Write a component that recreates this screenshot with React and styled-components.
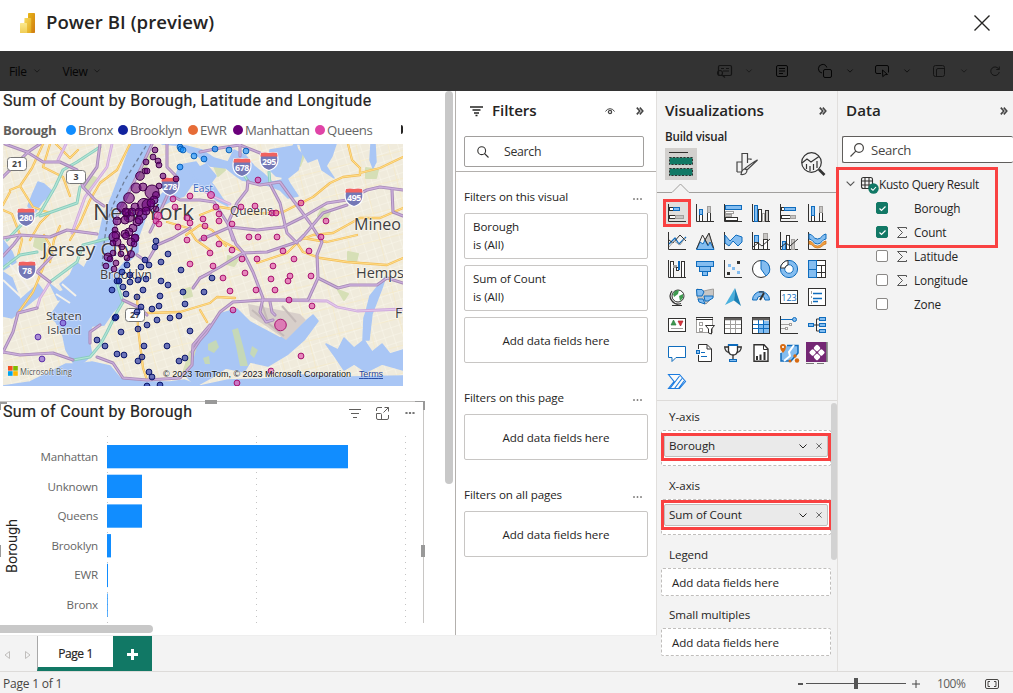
import React from "react";
import styled, { createGlobalStyle } from "styled-components";

const Global = createGlobalStyle`
  *, *::before, *::after { box-sizing: border-box; }
  body { margin: 0; background: #fff; font-family: "Open Sans", "Noto Sans", sans-serif; font-size: 12px; color: #252423; overflow: hidden; }
`;

const Page = styled.div`
  width: 1013px; height: 693px; display: flex; flex-direction: column; overflow: hidden; white-space: nowrap;
`;
const Icon = styled.svg`
  display: block; flex: none; overflow: visible; fill: none; stroke: ${(p) => p.$c || "#252423"}; stroke-width: ${(p) => p.$w || 1};
`;

/* ---------- header ---------- */
const Header = styled.header`
  height: 51px; flex: none; display: flex; align-items: center; padding: 0 23px 5px 20px; background: #fff;
`;
const AppTitle = styled.h1`
  margin: -2px 0 0 11px; flex: 1; font-size: 18.6px; font-weight: 600; letter-spacing: 0.04px; line-height: 24px;
`;
const Toolbar = styled.nav`
  height: 40px; flex: none; background: #333; display: flex; align-items: center; padding: 0 13px 0 9px; color: #050505;
`;
const MenuItem = styled.div`
  display: flex; align-items: center; gap: 7px; margin-right: 23px; font-size: 12px; letter-spacing: -0.35px;
`;
const Spacer = styled.div`flex: 1;`;
const Tool = styled.div`
  width: ${(p) => p.$w}px; display: flex; align-items: center; justify-content: space-between; margin-right: ${(p) => p.$mr}px;
  opacity: ${(p) => (p.$dim ? 0.65 : 1)};
`;

/* ---------- body columns ---------- */
const Body = styled.main`height: 580px; flex: none; display: flex;`;
const LeftSide = styled.div`width: 657px; flex: none; display: flex; flex-direction: column;`;
const Workspace = styled.div`height: 544px; flex: none; display: flex;`;
const Canvas = styled.section`
  position: relative; width: 456px; flex: none; overflow: hidden; border-right: 1px solid #b3b0ad; background: #fff;
`;
const ScrollBar = styled.div`
  position: absolute; background: #c8c8c8; border-radius: 4px;
  ${(p) => (p.$vertical ? "top: 0; right: 2px; width: 8px; height: 393px;" : "left: -6px; bottom: 2px; height: 8px; width: 159px;")}
`;
const VisualTitle = styled.h2`
  margin: ${(p) => p.$up || 0}px 0 0; font-family: Roboto, sans-serif; font-weight: 400; font-size: 16px; line-height: 20px; color: #252423;
  letter-spacing: ${(p) => p.$ls}px; -webkit-text-stroke: 0.2px #252423;
`;
const MapVisual = styled.div`padding: 0 0 0 3px; height: 310px; display: flex; flex-direction: column;`;
const Legend = styled.div`
  display: flex; align-items: center; height: 33px; padding-top: 4px; font-size: 13.2px; color: #666; letter-spacing: -0.33px;
`;
const LegendName = styled.span`font-weight: 700; color: #605e5c; width: 63px; letter-spacing: -0.4px;`;
const LegendItem = styled.span`
  display: flex; align-items: center; gap: 2px; width: ${(p) => p.$w}px;
  &::before { content: ""; width: 10px; height: 10px; border-radius: 50%; background: ${(p) => p.$c}; flex: none; }
`;
const LegendNext = styled.span`margin-left: 10px; width: 2px; height: 9px; background: #252423; border-radius: 0 2px 2px 0;`;
const MapSvg = styled.svg`display: block; width: 400px; height: 242px;`;

const ChartVisual = styled.div`
  position: relative; width: 424px; height: 222px; border: solid #c8c6c4; border-width: 1px 1px 0 0;
`;
const ChartHead = styled.div`
  display: flex; align-items: center; height: 22px; padding: 0 7px 0 3px; gap: 15px;
`;
const Handle = styled.i`
  position: absolute; width: ${(p) => p.$w}px; height: ${(p) => p.$h}px; left: ${(p) => p.$x}px; top: ${(p) => p.$y}px; background: #999;
`;
const ChartSvg = styled.svg`display: block; width: 423px; height: 199px;`;

const Tabs = styled.div`height: 36px; flex: none; display: flex; background: #f3f3f3; border-top: 1px solid #eee;`;
const TabNav = styled.div`width: 37px; display: flex; align-items: center; padding-left: 4px; gap: 15px; padding-top: 2px;`;
const Tab = styled.div`
  width: 76px; background: #fff; border-left: 1px solid #a8a8a8; border-bottom: 4px solid #117865;
  display: flex; align-items: center; justify-content: center; font-size: 12px; font-weight: 500; -webkit-text-stroke: 0.2px #252423; letter-spacing: -0.4px; padding-top: 4px;
`;
const AddTab = styled.div`width: 39px; background: #117865; display: flex; align-items: center; justify-content: center; padding-top: 2px;`;

/* ---------- filters ---------- */
const Filters = styled.aside`width: 201px; border-right: 1px solid #e1dfdd; background: #fff; display: flex; flex-direction: column;`;
const FiltersTop = styled.div`height: 81px; border-bottom: 1px solid #b3b0ad; padding: 0 12px 0 8px;`;
const PanelHead = styled.div`
  height: 40px; display: flex; align-items: center; padding: ${(p) => p.$pad || "0"};
`;
const PanelTitle = styled.h3`
  margin: -2px 0 0 ${(p) => p.$ml || 0}px; flex: 1; font-size: 15.2px; font-weight: 600; letter-spacing: ${(p) => p.$ls || 0}px;
`;
const SearchBox = styled.div`
  height: ${(p) => p.$h}px; margin-top: 5px; border: 1px solid ${(p) => p.$b}; border-right-width: ${(p) => (p.$open ? 0 : 1)}px;
  border-radius: 2px; display: flex; align-items: center; background: #fff; padding-left: ${(p) => p.$pl}px; gap: ${(p) => p.$gap}px;
  font-size: ${(p) => p.$fs}px; letter-spacing: -0.3px; color: ${(p) => p.$c};
`;
const EyeSlot = styled.span`margin-right: 21px;`;
const FilterGroup = styled.section`
  padding: 0 8px; display: flex; flex-direction: column; gap: 6px; margin-top: ${(p) => p.$mt}px;
`;
const GroupHead = styled.div`
  display: flex; justify-content: space-between; align-items: center; height: 20px; padding: 0 6px 2px 0; font-size: 11.6px; letter-spacing: -0.1px;
  svg { margin-top: 5px; }
`;
const Card = styled.div`
  height: 46px; border: 1px solid #c8c6c4; border-radius: 2px; font-size: 11.6px; line-height: 18px; letter-spacing: -0.08px;
  ${(p) => (p.$empty ? "display: flex; align-items: center; justify-content: center; padding-top: 1px;" : "padding: 4px 8px;")}
`;

/* ---------- visualizations ---------- */
const Viz = styled.aside`
  width: 181px; flex: none; background: #f3f3f3; border-right: 1px solid #e1dfdd; display: flex; flex-direction: column;
`;
const BuildLabel = styled.div`font-size: 11.6px; font-weight: 600; line-height: 16px; padding-left: 8px; margin: -2px 0 3px; letter-spacing: -0.16px;`;
const BuildTabs = styled.div`display: flex; height: 44px; padding-left: 8px; gap: 34px;`;
const BuildTab = styled.div`
  width: 32px; height: 32px; flex: none; background: ${(p) => (p.$on ? "#d2d0ce" : "none")}; display: flex; align-items: center; justify-content: center;
`;
const Gallery = styled.div`
  height: 208px; display: grid; grid-template-columns: repeat(6, 28px); grid-auto-rows: 28px; padding: 6px 0 0 6px; border-bottom: 1px solid #dddbd9;
`;
const Cell = styled.div`
  display: flex; align-items: center; justify-content: center;
  ${(p) => p.$on && "background: #e1dfdd; outline: 3px solid #f94141; outline-offset: -3px;"}
`;
const Wells = styled.div`position: relative; flex: 1; padding: 3px 0 0 4px;`;
const WellLabel = styled.div`height: 26px; display: flex; align-items: center; padding: 0 0 2px 8px; font-size: 11.6px; letter-spacing: -0.08px; margin-top: ${(p) => p.$mt || 0}px;`;
const Well = styled.div`
  position: relative; width: 170px; height: ${(p) => (p.$chip ? 36 : 28)}px; border: 1px dashed #c0bebc; background: #fff; border-radius: 2px;
  padding: ${(p) => (p.$chip ? "4px 2px" : "0 0 0 10px")}; font-size: 11.6px; line-height: 27px; letter-spacing: -0.08px;
`;
const Chip = styled.div`
  height: 22px; background: #eaeaea; border: 1px solid #c0bebc; border-radius: 2px; display: flex; align-items: center; padding: 0 5px 0 4px; gap: 9px; line-height: 20px;
`;
const Callout = styled.div`
  position: absolute; border: 3px solid #f94141; left: ${(p) => p.$x}px; top: ${(p) => p.$y}px; width: ${(p) => p.$w}px; height: ${(p) => p.$h}px;
`;
const WellScroll = styled.div`position: absolute; right: 0; top: 2px; width: 6px; height: 157px; background: #d2d2d2; border-radius: 3px;`;
const Grow = styled.span`flex: 1;`;

/* ---------- data ---------- */
const Data = styled.aside`position: relative; flex: 1; background: #f3f3f3; padding-left: 4px;`;
const Tree = styled.div`margin-top: 9px; font-size: 11.8px; letter-spacing: -0.16px;`;
const TableRow = styled.div`height: 24px; display: flex; align-items: center; padding-left: 4px; letter-spacing: -0.3px;`;
const TableIcon = styled.span`margin: 0 -1px 0 6px;`;
const FieldRow = styled.div`height: 24px; display: flex; align-items: center; padding-left: 34px;`;
const Check = styled.span`
  width: 12px; height: 12px; border-radius: 2px; border: 1px solid ${(p) => (p.$on ? "#117865" : "#8a8886")}; background: ${(p) => (p.$on ? "#117865" : "#fff")};
  display: flex; align-items: center; justify-content: center;
`;
const SigmaSlot = styled.span`width: 26px; padding-left: 9px;`;

/* ---------- status ---------- */
const Status = styled.footer`
  height: 22px; flex: none; background: #f3f3f3; border-top: 1px solid #dddbd9; display: flex; align-items: center; padding: 2px 14px 0 3px; color: #484644; font-size: 12px; letter-spacing: -0.2px;
`;
const ZoomTrack = styled.div`
  width: 100px; height: 11px; margin: 0 6px 0 3px; display: flex; align-items: center; justify-content: center;
  background: linear-gradient(#555, #555) center / 100% 1px no-repeat;
`;
const ZoomThumb = styled.div`width: 4px; height: 11px; background: #555;`;
const ZoomValue = styled.span`margin: 0 19px 0 17px; color: #605e5c; width: 29px; letter-spacing: -0.55px;`;

const Chevron = ({ c = "#252423", s = 6, w = 1 }) => (
  <Icon $c={c} $w={w} width={s} height={s / 2 + 1} viewBox="0 0 8 5"><path d="M.5.5 4 4 7.5.5" /></Icon>
);
const Collapse = () => (
  <Icon $c="#444" $w={1.6} width="8" height="8" viewBox="0 0 8 8"><path d="M.8.6 3.8 4 .8 7.4M3.8 .6 6.8 4 3.8 7.4" /></Icon>
);
const Dots = ({ c = "#605e5c", s = 1.6, w = 9 }) => (
  <Icon width={w} height="4" viewBox="0 0 9 4">
    {[1, 4.5, 8].map((x) => <rect key={x} x={x - s / 2} y={2 - s / 2} width={s} height={s} rx=".4" fill={c} stroke="none" />)}
  </Icon>
);

/* ---------- map data ---------- */
const WATER = [
  "131,144 152,144 141,168 129,192 117,215 113,240 98,240 103,218 112,196 121,172",
  "97,240 114,238 112,262 113,280 118,292 122,303 113,312 104,325 92,326 88,336 92,355 84,362 74,364 66,350 63,336 56,322 50,316 60,302 66,294 60,284 70,275 76,262 84,268 90,256",
  "148,208 144,222 138,238 138,252 128,262 122,276 119,290 112,284 118,270 130,256 132,240 140,222 150,206",
  "3,272 12,278 20,300 38,284 44,292 24,308 12,318 3,316", "3,240 12,252 16,262 3,270",
  "38,182 44,184 53,192 42,202 34,214 28,206 33,193",
  "50,284 60,292 70,288 72,298 58,300",
  "162,144 180,144 188,152 198,156 210,166 226,168 236,176 242,180 262,184 270,186 280,190 288,198 298,196 290,184 284,172 290,160 300,158 296,144 336,144 332,156 326,166 334,178 322,170 318,158 308,162 302,152 300,144 294,144 284,168 282,180 272,182 264,174 254,166 246,156 234,150 228,162 214,158 202,150 186,146",
  "270,150 294,146 302,154 298,170 288,178 276,176 268,168",
  "180,165 196,162 206,176 214,186 222,198 228,206 216,200 206,190 192,184 184,196 172,200 158,208 150,206 164,192 174,180",
  "371,144 375,144 376,162 373,168 370,160", "190,172 206,164 216,176 210,184 196,180",
  "200,338 208,330 219,314 237,309 250,322 280,338 295,330 313,315 318,321 304,340 288,354 268,366 250,362 244,372 226,368 214,376 196,386 186,376 194,360",
  "3,386 30,382 50,372 66,364 78,364 92,362 110,366 120,378 142,382 170,382 184,380 200,386",
  "200,386 228,380 262,379 300,375 350,377 403,376 403,386",
  "326,344 338,350 344,338 354,348 364,340 372,352 382,344 390,354 403,350 403,370 382,364 366,372 354,364 344,370 336,358",
  "366,312 370,296 386,276 382,288 372,314 369,340 363,340 364,318",
];
const LANDS = [
  "208,344 216,340 219,347 214,353 208,350", "232,330 238,328 243,346 248,366 240,366 236,346", "252,346 258,350 254,358 250,354", "203,358 209,356 210,364 205,364",
];
const PARKS = [
  "146,150 152,154 140,180 134,178", "297,152 304,156 300,166 296,160", "228,256 238,260 234,266 227,264", "214,166 222,162 225,170 218,176",
  "36,236 46,240 42,250 34,246", "90,176 96,178 90,192 85,188", "322,208 330,212 326,220 318,216",
  "190,352 202,346 196,372 182,376", "366,168 378,170 376,178 366,178", "338,290 348,294 344,300", "184,290 190,288 192,296 184,298", "348,252 358,254 356,262 348,260",
];
const ORANGE = [
  "43,144 32,168 20,186 10,190", "20,186 33,207 50,213 40,223 30,240", "50,144 43,167 63,177 70,196", "130,144 117,170 100,183 90,200 80,223 70,240",
  "348,144 352,160 360,168 360,175 343,177 330,183 313,197 283,212 250,214", "360,173 380,168 403,157", "300,240 313,235 333,233 360,218 380,218 403,208",
  "200,215 220,207 232,209", "3,210 12,214 22,240 18,256", "137,295 138,328 143,368 147,380", "147,313 180,312 210,303 217,297 235,298", "18,313 33,292 43,268 50,245 44,235",
  "257,263 287,253 297,243 303,252 320,258 347,262 387,265 403,258", "303,238 327,242 357,235", "200,310 207,322", "167,222 188,228 196,240 210,250", "220,240 243,252",
  "186,235 200,225 212,230 226,246", "56,144 70,158 78,150", "3,205 10,192", "60,226 54,240 50,262",
];
const PURPLE = [
  "5,144 27,152 43,162 60,162 77,170 83,187 95,200 104,206", "3,177 28,152 40,144", "100,144 97,167 83,187", "152,144 141,168 129,192 118,214 113,238",
  "3,238 20,235 50,237 67,230 97,234", "167,144 167,167 177,177 167,193 180,200 200,200 214,202 228,224 233,240", "200,152 220,148 240,145 260,153", "240,144 240,156",
  "248,181 247,190 237,203 228,223 236,244 243,252 253,272 263,298 260,312 266,322 273,320", "248,182 260,185 280,182 293,200 310,223 322,242 317,255 318,278 308,300 263,300 233,302 220,312 207,332 200,340 192,352",
  "270,184 280,203 287,233 297,243", "200,240 230,227 257,230 283,227 303,217 327,203 347,200 367,190 380,187 403,190", "392,190 393,212 403,216", "300,240 323,213 347,205",
  "200,278 220,267 243,253 267,252 297,242 303,236", "318,278 338,288 350,285 377,285 387,278 403,283", "270,302 272,312 275,315",
  "3,352 13,332 18,313 37,308", "50,282 37,272 53,255", "3,352 20,355 53,353 73,360", "90,343 90,332 100,325", "97,357 113,363 123,378 147,380 180,378 192,365 193,345 210,325",
  "123,300 140,308 147,315", "193,288 200,278 210,273", "137,255 147,262 157,245 173,238 190,228", "168,194 158,216 150,232", "3,256 14,244 20,236",
];
const LILAC = ["112,144 107,167 85,197 72,233", "50,282 40,298 37,308", "263,300 327,301 337,307 357,311 403,309", "66,144 58,160", "200,188 212,196 230,204"];
const TEAL = [
  "100,147 77,162 63,170 55,187 40,213 23,223 7,240", "80,187 77,203 40,216", "242,172 248,181", "269,172 270,184", "73,360 90,357 100,345 107,332 117,312 123,302 117,284",
  "3,268 20,255 37,252", "50,282 77,262 83,245 110,238",
];

const MANHATTAN = [
  [155, 150], [153, 157], [158, 161], [146, 162], [159, 165], [145, 171], [147, 171], [140, 176, 4.3], [163, 176], [176, 179], [159, 186], [152, 192, 7], [136, 188, 5], [143, 187, 4],
  [129, 198, 5.3], [156, 195, 3.5], [154, 200, 4], [122, 207, 5], [144, 205, 6.6], [148, 205, 6], [135, 207, 4], [156, 209], [127, 213, 4], [129, 217, 5], [142, 215, 5], [125, 220, 4],
  [117, 221, 4], [137, 222, 4], [133, 228, 4], [129, 232, 4], [115, 230], [116, 235, 4], [125, 234, 4], [135, 238, 3.5], [139, 220, 4], [146, 211, 4], [114, 237, 5], [126, 236, 3.5], [135, 238, 4],
  [117, 242, 4], [113, 243], [122, 247], [131, 242, 4], [134, 244], [113, 253], [121, 254], [131, 254, 3.5], [127, 258], [108, 257, 4], [110, 259], [116, 263], [106, 266], [114, 269], [126, 212, 4], [132, 212, 4], [151, 203, 4], [139, 212, 4],
];
const BROOKLYN = [
  [156, 241], [155, 247], [168, 254], [161, 262], [145, 260], [149, 265], [141, 267], [127, 265], [181, 270], [122, 272], [130, 275], [130, 282], [138, 280], [146, 279], [161, 281], [117, 281], [119, 281],
  [168, 285], [123, 287], [112, 290], [126, 294], [143, 290], [183, 292], [137, 297], [160, 296], [204, 292], [185, 304], [141, 307], [152, 309], [159, 306], [137, 312], [115, 318], [116, 317], [170, 318],
  [179, 316], [157, 320], [147, 325], [121, 332], [138, 329], [190, 331], [97, 340], [105, 346], [144, 346], [167, 346], [117, 354], [124, 355], [142, 357], [138, 361], [179, 361], [185, 358], [149, 372],
  [152, 377], [147, 386], [160, 385], [212, 278],
];
const QUEENS = [
  [173, 199], [175, 207], [190, 196], [158, 216, 4], [156, 221], [159, 224], [178, 227], [187, 218], [190, 223], [203, 219], [205, 226], [211, 195, 3.5], [216, 207], [219, 214], [219, 221], [232, 224],
  [241, 207], [255, 206], [272, 213], [276, 213], [258, 180], [301, 203], [326, 221], [321, 237], [249, 237], [258, 237], [277, 237], [204, 238], [219, 244], [210, 253], [232, 250], [213, 266], [223, 278],
  [242, 259], [257, 259], [245, 273], [283, 251], [294, 259], [309, 251], [273, 266], [271, 279], [290, 276], [288, 281], [311, 276], [230, 291], [256, 290], [275, 290], [289, 300], [312, 306], [233, 310],
  [280.5, 325, 5.8], [301, 356], [271, 371], [237, 383], [187, 240], [190, 264],
];
const BRONX = [[180, 147], [181, 149], [183, 150], [194, 156], [204, 159], [180, 167], [215, 149], [229, 150], [246, 151]];
const STATEN = [[63, 323], [38, 337], [42, 359]];

const Roads = ({ list, edge, core, w }) => (
  <g fill="none" strokeLinejoin="round" strokeLinecap="round">
    {list.map((p) => <polyline key={p} points={p} stroke={edge} strokeWidth={w} />)}
    {list.map((p) => <polyline key={p} points={p} stroke={core} strokeWidth={w * 0.42} />)}
  </g>
);
const Points = ({ list, fill, stroke, o = 0.6 }) => (
  <g fill={fill} fillOpacity={o} stroke={stroke} strokeWidth="1">
    {list.map(([x, y, r = 2.9], i) => <circle key={i} cx={x} cy={y} r={r} />)}
  </g>
);
const Shield = ({ x, y, n, w = 16 }) => (
  <g transform={`translate(${x} ${y})`}>
    <path d={`M${-w / 2} -8 Q${-w / 4} -9 0 -8 Q${w / 4} -9 ${w / 2} -8 Q${w / 2 + 4} 6 0 9.5 Q${-w / 2 - 4} 6 ${-w / 2} -8Z`} fill="#7478b6" stroke="#fff" strokeWidth="1.2" />
    <path d={`M${-w / 2} -8 Q${-w / 4} -9 0 -8 Q${w / 4} -9 ${w / 2} -8 L${w / 2 + 0.7} -4.5H${-w / 2 - 0.7}Z`} fill="#f0625f" />
    <text y="4" textAnchor="middle" fontSize="8.8" fontWeight="700" fill="#fff" letterSpacing="-.3">{n}</text>
  </g>
);
const RouteSign = ({ x, y, n }) => (
  <g transform={`translate(${x} ${y})`}>
    <rect x="-9.5" y="-6.5" width="19" height="13" rx="3" fill="#fff" stroke="#777" strokeWidth="1" />
    <text y="3.3" textAnchor="middle" fontSize="8.8" fontWeight="700" fill="#444">{n}</text>
  </g>
);
const Label = ({ x, y, s, w, c = "#3f3f3f", children }) => (
  <text x={x} y={y} fontSize={s} textLength={w} lengthAdjust="spacingAndGlyphs" fill={c} stroke="#fff" strokeOpacity=".55" strokeWidth="1.6" paintOrder="stroke">{children}</text>
);

const BoroughMap = () => (
  <MapSvg viewBox="3 144 400 242">
    <defs>
      <pattern id="streets" width="9" height="8" patternUnits="userSpaceOnUse" patternTransform="rotate(-18)">
        <path d="M0 0H9M0 0V8" stroke="#faf8ee" strokeWidth=".9" fill="none" />
      </pattern>
      <pattern id="avenues" width="31" height="27" patternUnits="userSpaceOnUse" patternTransform="rotate(-14)">
        <path d="M0 0H31M0 0V27" stroke="#f7e9bf" strokeWidth="1" fill="none" />
      </pattern>
    </defs>
    <rect x="3" y="144" width="400" height="242" fill="#f0ebdc" />
    <rect x="3" y="144" width="400" height="242" fill="url(#streets)" />
    <rect x="3" y="144" width="400" height="242" fill="url(#avenues)" />
    {PARKS.map((p) => <polygon key={p} points={p} fill="#d6dfb6" strokeWidth="2" stroke="#d6dfb6" strokeLinejoin="round" />)}
    {WATER.map((p) => <polygon key={p} points={p} fill="#a9c6f5" stroke="#a9c6f5" strokeWidth="1.5" strokeLinejoin="round" />)}
    {LANDS.map((p) => <polygon key={p} points={p} fill="#c5d8b8" />)}
    <polygon points="248,304 300,314 306,320 286,340 266,326 250,316" fill="#d8cfca" />
    <path d="M252 310 284 336M282 306 296 322M262 304 268 322" stroke="#c4bab8" strokeWidth="2" />
    <path d="M3 280 20 296M8 262 30 290M62 284 76 296M56 294 70 303M184 334 196 342" stroke="#f4f1ea" strokeWidth="2" />
    <Roads list={ORANGE} edge="#f3bd5a" core="#ffe08a" w={2.3} />
    <Roads list={TEAL} edge="#8acdbe" core="#b4e5d6" w={3} />
    <Roads list={LILAC} edge="#cfa9dc" core="#e3c9ec" w={2.8} />
    <Roads list={PURPLE} edge="#a78ab8" core="#cbaedb" w={3.1} />
    <polyline points="146,146 125,180 113,205 107,222 104,244 102,270" fill="none" stroke="#6f7f99" strokeWidth="1.3" strokeDasharray="4 3" />
    <Shield x={26} y={217} n="280" /><Shield x={27} y={270} n="78" /><Shield x={170} y={186} n="278" /><Shield x={242} y={167} n="678" />
    <Shield x={269} y={161} n="295" /><Shield x={354} y={197} n="495" />
    <RouteSign x={17} y={164} n="21" /><RouteSign x={76} y={177} n="3" /><RouteSign x={135} y={315} n="27" />
    <Label x={93} y={220} s={22} w={101}>New York</Label>
    <Label x={42} y={256} s={18} w={92}>Jersey City</Label>
    <Label x={100} y={279} s={12} w={52}>Brooklyn</Label>
    <Label x={230} y={215} s={12} w={43}>Queens</Label>
    <Label x={193} y={192} s={10.5} w={20} c="#3d6cc0">East</Label>
    <Label x={354} y={230} s={16} w={47}>Mineo</Label>
    <Label x={356} y={278} s={15} w={48}>Hemps</Label>
    <Label x={395} y={318} s={14}>F</Label>
    <Label x={46} y={319.500} s={11.200} w={36}>Staten</Label>
    <Label x={47} y={334} s={11.200} w={34}>Island</Label>
    <Points list={STATEN} fill="#7b4fd0" stroke="#5b2fa8" />
    <Points list={BROOKLYN} fill="#12239e" stroke="#0a1668" />
    <Points list={BRONX} fill="#118dff" stroke="#0b62b8" />
    <Points list={QUEENS} fill="#e044a7" stroke="#a8126f" />
    <Points list={MANHATTAN} fill="#6b007b" stroke="#3f0049" />
    <rect x="8" y="366" width="4.6" height="4.6" fill="#f25022" /><rect x="13.2" y="366" width="4.6" height="4.6" fill="#7fba00" />
    <rect x="8" y="371.2" width="4.6" height="4.6" fill="#00a4ef" /><rect x="13.2" y="371.2" width="4.6" height="4.6" fill="#ffb900" />
    <text x="20" y="374.5" fontSize="8.5" textLength="52" lengthAdjust="spacingAndGlyphs" fill="#555" stroke="#fff" strokeOpacity=".6" paintOrder="stroke">Microsoft Bing</text>
    <text x="163" y="377" fontSize="9" fontFamily="Liberation Sans, sans-serif" textLength="188" fill="#111" stroke="#fff" strokeOpacity=".5" paintOrder="stroke">© 2023 TomTom, © 2023 Microsoft Corporation</text>
    <text x="359" y="377" fontSize="9" fontFamily="Liberation Sans, sans-serif" textLength="24" fill="#1f45a0" textDecoration="underline">Terms</text>
  </MapSvg>
);

const BARS = [["Manhattan", 241], ["Unknown", 35], ["Queens", 35], ["Brooklyn", 4], ["EWR", 1], ["Bronx", 0.7]];
const BarChart = () => (
  <ChartSvg viewBox="0 424 423 199">
    <g stroke="#c4c4c4" strokeWidth="1" strokeDasharray="1 5"><path d="M107.5 436V623M256.5 436V623M405.5 436V623" /></g>
    {BARS.map(([n, v], i) => (
      <g key={n}>
        <rect x="107" y={445 + i * 29.7} width={v} height="23.3" fill="#118dff" />
        <text x="98" y={461 + i * 29.6} textAnchor="end" fontSize="11.6" letterSpacing="-.2" fill="#666">{n}</text>
      </g>
    ))}
    <text transform="translate(17 573) rotate(-90)" fontFamily="Roboto, sans-serif" fontSize="14.5" textLength="54" fill="#252423">Borough</text>
  </ChartSvg>
);

/* ---------- gallery icons, 18 x 18 ---------- */
const D = "#323130", B = "#0f6cbd", L = "#84bdf0", G = "#a19f9d";
const AX = <path d="M.5 0V17.5H18" stroke={D} />;
const R = (x, y, w, h, s = D, f = "#fff") => <rect x={x + 0.5} y={y + 0.5} width={w - 1} height={h - 1} stroke={s} fill={f} />;
const ICONS = [
  <>{AX}{R(1, 3, 5, 4)}{R(5, 3, 7, 4, B, L)}{R(1, 11, 7, 4)}{R(7, 11, 9, 4, G, "#c8c6c4")}</>,
  <>{AX}{R(3, 10, 4, 8)}{R(3, 5, 4, 6, B, L)}{R(11, 8, 4, 10)}{R(11, 2, 4, 7, G, "#c8c6c4")}</>,
  <>{AX}{R(1, 1, 17, 5, B, L)}{R(1, 7, 9, 3, G)}{R(1, 10, 7, 3, G, "#c8c6c4")}{R(1, 13, 13, 4, D)}</>,
  <>{AX}{R(2, 1, 4, 17, B, L)}{R(6, 5, 4, 13, D)}{R(10, 9, 3, 9, G)}{R(13, 6, 4, 12, D, "#c8c6c4")}</>,
  <>{AX}{R(1, 3, 4, 4)}{R(4, 3, 12, 4, B, L)}{R(1, 11, 10, 4)}{R(10, 11, 6, 4, G, "#c8c6c4")}</>,
  <>{AX}{R(3, 11, 4, 7)}{R(3, 2, 4, 10, B, L)}{R(11, 8, 4, 10)}{R(11, 2, 4, 7, G, "#c8c6c4")}</>,
  <>{AX}<path d="M1 12 7 6 11 12 18 5" stroke={B} strokeWidth="1.3" /><path d="M1 8 5 11 12 3 18 9" stroke={D} /><path d="M1 15 6 9 12 13 17 6" stroke={G} /></>,
  <><path d="M8 9 13 2 18 17" fill="#c8c6c4" stroke={G} /><path d="M.5 17.500 4 10 7 12 9 8 12 14 14 10 18 17.500Z" fill={L} stroke={B} /><path d="M.5 17 6.500 3 12 13M9 8 13 1 17.500 16" stroke={D} /></>,
  <>{AX}<path d="M1 3 6 9 12 3 18 5V10L14 14 9 9 5 14 1 11Z" fill={L} stroke={B} /></>,
  <>{AX}{R(2, 3, 5, 8, B, L)}{R(11, 1, 5, 7, G, "#c8c6c4")}{R(2, 10, 5, 8)}{R(11, 7, 5, 11)}<path d="M1 15 6 11 10 14 18 7" stroke={D} /></>,
  <>{AX}{R(2, 9, 4, 9, B, L)}{R(6, 3, 4, 15)}{R(11, 7, 4, 11, G, "#c8c6c4")}<path d="M1 15 6 11 10 14 18 7" stroke={D} /></>,
  <>{AX}<path d="M1 2C5 2 5 7 9.500 7S14 2 18 2V7C14 7 14 12 9.500 12S5 7 1 7Z" fill={L} stroke={B} /><path d="M1 9C5 9 5 14 9.500 14S14 9 18 9V12C15 12 14 16 9.500 16S5 12 1 12Z" fill="#f0a040" stroke="#c66a12" strokeWidth=".7" /></>,
  <>{AX}{R(2, 1, 4, 17)}{R(5, 5, 4, 3, G, G)}{R(8, 7, 3, 4, D)}{R(10, 1, 2, 9, B, L)}{R(13, 1, 4, 17)}</>,
  <>{R(0, 1, 18, 6, B, L)}{R(3, 6, 12, 6, B, L)}{R(6, 11, 6, 5, B, L)}</>,
  <>{AX}<g stroke="none"><rect x="13" y="1" width="3" height="3" fill={D} /><rect x="4" y="4" width="3" height="3" fill={L} /><rect x="8" y="7" width="3" height="3" fill={L} /><rect x="13" y="11" width="3" height="3" fill={L} /><rect x="3" y="12" width="3" height="3" fill={D} /></g></>,
  <><circle cx="9" cy="9" r="8.5" fill="#fff" stroke={D} /><path d="M9 9V.5A8.5 8.5 0 0 1 14 16Z" fill={L} stroke={B} /></>,
  <><circle cx="9" cy="9" r="6.5" stroke={L} strokeWidth="4" /><circle cx="9" cy="9" r="8.6" stroke={B} /><circle cx="9" cy="9" r="4.3" fill="#fff" stroke={B} /><path d="M.5 8A8.5 8.5 0 0 1 8 .5V5Q5.500 5.500 5 8Z" fill="#fff" stroke={D} /></>,
  <>{R(0, 0, 18, 18)}{R(0, 0, 9, 10, B, L)}{R(0, 9, 9, 9, B, L)}<path d="M9 5.500H18M13.500 5.500V18M9 12.500H18" stroke={D} /></>,
  <><circle cx="10" cy="8" r="6" fill="#fff" stroke={D} /><path d="M7 3 11 2 10 6 6 9 5 6ZM11 8 15 6 15 10 12 13Z" fill="#3f9a50" stroke="none" /><path d="M4 3A8 8 0 0 0 13 15.500M9 16V18M4 17.500H14" stroke={D} strokeWidth="1.200" /></>,
  <><path d="M1 1 5 2 8 3 12 2 17.500 1V8L14 12 10 16 7 14 3 13 1 8Z" fill="#c8c6c4" stroke={G} /><path d="M.5 1.500H6L8 4 6 8H1ZM8 8H17V10L12 13H9ZM2 11H7L9 16 3 14Z" fill={L} stroke={B} /></>,
  <><path d="M11 0 1 17 10 12.500Z" fill="#49b0de" stroke="none" /><path d="M11 0 17 18 10 12.500Z" fill="#1a7fb4" stroke="none" /></>,
  <><path d="M.5 12A8.500 8.500 0 0 1 17.500 12H13A4 4 0 0 0 5 12Z" fill={L} stroke={B} /><path d="M7 4 12 4" stroke={D} /><path d="M8 12 12 5" stroke={D} strokeWidth="2" /></>,
  <>{R(0, 2, 18, 14)}<text x="9" y="12.500" fontSize="9" textAnchor="middle" fill={B} stroke="none">123</text></>,
  <>{R(0, 0, 18, 18)}<path d="M3.500 3V6M3.500 8V10M3.500 13V16" stroke={G} /><path d="M5 5.500H14M5 10.500H14M5 13.500H10" stroke={B} strokeWidth="1.600" /></>,
  <>{R(0, 2, 18, 14)}<path d="M3 9 5.500 4 8 9Z" fill="#3f9a50" stroke="#2c7a3c" strokeWidth=".7" /><path d="M10 5H15L12.500 10Z" fill="#d9363e" stroke="#b0202a" strokeWidth=".7" /><path d="M3 12.500H15" stroke={G} /></>,
  <>{R(0, 1, 17, 16, G)}<path d="M0 1.500H17M0 3.500H17" stroke={D} />{R(3, 6, 4, 4, G)}{R(3, 12, 4, 4, G)}<path d="M9.500 9.500H18.500L15.500 13V18L12.500 17V13Z" fill="#fff" stroke={D} /></>,
  <>{R(0, 1, 18, 17, D)}<path d="M.5 3H17.500" stroke="#605e5c" strokeWidth="2.500" /><path d="M1 8.500H17M1 12.500H17M6.500 4V17M11.500 4V17" stroke={G} /></>,
  <>{R(0, 1, 18, 17, D)}<path d="M12 5H17V9H12ZM7 9H17V17H7Z" fill={L} stroke="none" /><path d="M.5 3H17.500" stroke="#605e5c" strokeWidth="2.500" /><path d="M1 8.500H17M1 12.500H17M6.500 4V17M11.500 4V17" stroke={B} /></>,
  <>{AX}<path d="M1 3.500H13" stroke={B} /><circle cx="14.500" cy="3.500" r="2" fill={L} stroke={B} /><path d="M1 8.500H9M1 12.500H5" stroke={G} />{R(9, 7, 3, 3, G)}{R(5, 11, 3, 3, G)}</>,
  <>{R(0, 7, 6, 4, B, L)}{R(11, 1, 7, 4, B, L)}{R(11, 7, 7, 4, B, L)}{R(11, 13, 7, 4, B, L)}<path d="M6 9H11M8.500 9V3H11M8.500 9V15H11" stroke={D} /></>,
  <path d="M.5 2.500H17.500V13.500H8L4 17.500V13.500H.5Z" stroke={B} fill="#fff" />,
  <><path d="M2.500 5V.5H11L15.500 5V17.500H2.500V11" fill="#fff" stroke={D} /><path d="M11 .5V5H15.500" stroke={D} />{R(0, 6, 4, 4, B, L)}<path d="M5 8.500H9M5 12.500H11" stroke={B} /></>,
  <><path d="M4.500 1H13.500V7Q13 11 9 11Q5 11 4.500 7Z" fill="#fff" stroke={D} strokeWidth="1.300" /><path d="M4 3H.7Q1 8 5.500 8.500M14 3H17.300Q17 8 12.500 8.500M9 11V15" stroke={D} strokeWidth="1.300" />{R(4, 0, 10, 2, B, L)}{R(5, 15, 8, 3, B, L)}</>,
  <><path d="M2 .7H12L16 5V17.300H2Z" fill="#fff" stroke={D} strokeWidth="1.400" /><path d="M11.500 1V5.500H16" stroke={D} /><path d="M5 12V16M8.500 10.500V16M12.500 8V16" stroke={D} strokeWidth="2" /></>,
  <><path d="M7 1.500H18V9L11 17H1V9" fill={L} stroke={B} strokeWidth="1.500" /><path d="M14 1 9 8 10 12 4 17" stroke="#fff" strokeWidth="2" /><path d="M0 3A3 3 0 0 1 6 3Q6 6 3 9Q0 6 0 3Z" fill="#d86a10" stroke="none" /><circle cx="3" cy="3" r="1.100" fill="#fff" stroke="none" /><g fill="#d86a10" stroke="none"><circle cx="15" cy="12" r="1.700" /><circle cx="17" cy="16.500" r="2.200" /><circle cx="10" cy="17" r="1.500" /></g></>,
  <><rect x="-2" y="-2" width="20" height="20" fill="#742774" stroke="none" /><path d="M18.900-2V18" stroke="#666" strokeWidth="1.500" /><g fill="#fff" stroke="none" transform="translate(9 8.500) rotate(45)"><rect x="-5.800" y="-5.800" width="5.400" height="5.400" rx="1.500" /><rect x=".4" y="-5.800" width="5.400" height="5.400" rx="1.500" /><rect x="-5.800" y=".4" width="5.400" height="5.400" rx="1.500" /><rect x=".4" y=".4" width="5.400" height="5.400" rx="1.500" /></g><path d="M-2 19.500H6M9 19.500H16" stroke="#777" /></>,
  <path d="M.5 2.500H11.500L17.500 9.500 11.500 16.500H.5L6 9.500ZM2 16.500 11.500 4M6.500 16.500 14 6.500M10.500 16.500 16 9" stroke="#1a7be0" strokeWidth="1.100" fill="#fff" fillOpacity=".6" />,
];

export default function App() {
  return (
    <Page>
      <Global />
      <Header>
        <Icon width="15" height="20" viewBox="0 0 15 20">
          <defs>
            <linearGradient id="g1" x1="0" y1="0" x2="1" y2="1"><stop stopColor="#e8b818" /><stop offset="1" stopColor="#cf7a12" /></linearGradient>
            <linearGradient id="g2" x1="0" y1="0" x2="1" y2="1"><stop stopColor="#f7d95e" /><stop offset="1" stopColor="#e2a91c" /></linearGradient>
            <linearGradient id="g3" x1="0" y1="0" x2="0" y2="1"><stop stopColor="#fbe98e" /><stop offset="1" stopColor="#f0cd55" /></linearGradient>
          </defs>
          <g stroke="none">
            <rect x="8" width="7" height="20" rx=".7" fill="url(#g1)" />
            <path d="M4.500 5H10.500Q11.200 5 11.200 5.700V20H4Z" fill="url(#g2)" />
            <path d="M.6 10H6.400Q7 10 7 10.600V20H.6Q0 20 0 19.400V10.600Q0 10 .6 10Z" fill="url(#g3)" />
          </g>
        </Icon>
        <AppTitle>Power BI (preview)</AppTitle>
        <Icon $w={1.4} width="16" height="16" viewBox="0 0 16 16"><path d="M.5.5 15.500 15.500M15.500.5.5 15.500" /></Icon>
      </Header>
      <Toolbar>
        <MenuItem>File <Chevron c="#111" /></MenuItem>
        <MenuItem>View <Chevron c="#111" /></MenuItem>
        <Spacer />
        <Tool $w={35} $mr={24} $dim>
          <Icon $c="#050505" $w={1.2} width="15" height="13" viewBox="0 0 15 13"><rect x="1.500" y=".5" width="13" height="10" rx="1.500" /><path d="M4 3.500H7M9 3.500H12M6 6H12" /><circle cx="3" cy="8" r="2.500" /><path d="M5 10 8 12.500" /></Icon>
          <Chevron c="#050505" />
        </Tool>
        <Tool $w={12} $mr={30}>
          <Icon $c="#050505" width="12" height="12" viewBox="0 0 12 12"><rect x=".5" y=".5" width="11" height="11" rx="1.500" /><path d="M3 3.500H9M3 6H9M3 8.500H7" /></Icon>
        </Tool>
        <Tool $w={35} $mr={22}>
          <Icon $c="#050505" width="14" height="14" viewBox="0 0 14 14"><rect x="5.500" y="5.500" width="8" height="8" rx="1.500" /><path d="M4 9A4.300 4.300 0 1 1 8.800 3.500" /></Icon>
          <Chevron c="#050505" />
        </Tool>
        <Tool $w={35} $mr={23}>
          <Icon $c="#050505" width="14" height="12" viewBox="0 0 14 12"><path d="M6 8.500H2Q.5 8.500.5 7V2Q.5.5 2 .5H12Q13.500.5 13.500 2V7.500" /><path d="M7.500 5 12.500 9.500 10 9.700 7.800 11.700Z" /></Icon>
          <Chevron c="#050505" />
        </Tool>
        <Tool $w={34} $mr={23} $dim>
          <Icon $c="#050505" width="12" height="12" viewBox="0 0 12 12"><rect x=".5" y=".5" width="11" height="11" rx="2" /><path d="M3.500 11V5Q3.500 3.500 5 3.500H11" /></Icon>
          <Chevron c="#050505" />
        </Tool>
        <Icon $c="#151515" width="10" height="10" viewBox="0 0 10 10"><path d="M9 3.500A4.300 4.300 0 1 0 9.300 6M9.300.5V3.500H6.300" /></Icon>
      </Toolbar>

      <Body>
        <LeftSide>
          <Workspace>
            <Canvas>
              <MapVisual>
                <VisualTitle $ls={0.34}>Sum of Count by Borough, Latitude and Longitude</VisualTitle>
                <Legend>
                  <LegendName>Borough</LegendName>
                  <LegendItem $c="#118dff" $w={52}>Bronx</LegendItem>
                  <LegendItem $c="#12239e" $w={70}>Brooklyn</LegendItem>
                  <LegendItem $c="#e66c37" $w={45}>EWR</LegendItem>
                  <LegendItem $c="#6b007b" $w={82}>Manhattan</LegendItem>
                  <LegendItem $c="#e044a7" $w={76}>Queens</LegendItem>
                  <LegendNext />
                </Legend>
                <BoroughMap />
              </MapVisual>
              <ChartVisual>
                <ChartHead>
                  <VisualTitle $up={-3} $ls={0.32}>Sum of Count by Borough</VisualTitle>
                  <Spacer />
                  <Icon $c="#605e5c" width="12" height="9" viewBox="0 0 12 9"><path d="M0 .5H12M2 4.500H10M4 8.500H8" /></Icon>
                  <Icon $c="#605e5c" width="13" height="13" viewBox="0 0 13 13"><path d="M6 .5H2Q.5.5.5 2V4M12.500 8V11Q12.500 12.500 11 12.500H2Q.5 12.500.5 11V6.500H4.500Q5.500 6.500 5.500 7.500V12M8.500.5H12.500V4.500M12.500.5 7.500 5.500" /></Icon>
                  <Dots s={2.2} w={12} c="#777" />
                </ChartHead>
                <BarChart />
                <Handle $x={0} $y={0} $w={7} $h={2} /><Handle $x={0} $y={0} $w={1} $h={8} />
                <Handle $x={205} $y={-2} $w={12} $h={4} />
                <Handle $x={415} $y={-1} $w={10} $h={1} /><Handle $x={423} $y={-1} $w={2} $h={9} />
                <Handle $x={0} $y={143} $w={1} $h={12} /><Handle $x={421} $y={143} $w={4} $h={12} />
              </ChartVisual>
              <ScrollBar $vertical />
              <ScrollBar />
            </Canvas>
            <Filters>
              <FiltersTop>
                <PanelHead $pad="0 0 0 6px">
                  <Icon $w={1.400} width="13" height="10" viewBox="0 0 13 10"><path d="M0 1H13M2.500 4H10.500M4 7H9M5.500 9.500H7.500" /></Icon>
                  <PanelTitle $ml={9} $ls={-0.1}>Filters</PanelTitle>
                  <EyeSlot>
                    <Icon $c="#444" width="10" height="7" viewBox="0 0 10 7"><path d="M.5 3.500Q2 .7 5 .7T9.500 3.500" /><circle cx="5" cy="4" r="1.600" strokeWidth="1.300" /></Icon>
                  </EyeSlot>
                  <Collapse />
                </PanelHead>
                <SearchBox $h={31} $b="#a19f9d" $pl={12} $gap={15} $fs={12.3} $c="#323130">
                  <Icon $c="#323130" $w={1.100} width="12" height="12" viewBox="0 0 12 12"><circle cx="4.700" cy="4.700" r="3.900" /><path d="M7.500 7.500 11.500 11.500" /></Icon>
                  Search
                </SearchBox>
              </FiltersTop>
              <FilterGroup $mt={15}>
                <GroupHead>Filters on this visual <Dots /></GroupHead>
                <Card>Borough<br />is (All)</Card>
                <Card>Sum of Count<br />is (All)</Card>
                <Card $empty>Add data fields here</Card>
              </FilterGroup>
              <FilterGroup $mt={25}>
                <GroupHead>Filters on this page <Dots /></GroupHead>
                <Card $empty>Add data fields here</Card>
              </FilterGroup>
              <FilterGroup $mt={25}>
                <GroupHead>Filters on all pages <Dots /></GroupHead>
                <Card $empty>Add data fields here</Card>
              </FilterGroup>
            </Filters>
          </Workspace>
          <Tabs>
            <TabNav>
              <Icon $c="#c0bebc" width="6" height="8" viewBox="0 0 6 8"><path d="M5.500.5V7.500L1 4Z" /></Icon>
              <Icon $c="#c0bebc" width="6" height="8" viewBox="0 0 6 8"><path d="M.5.5V7.500L5 4Z" /></Icon>
            </TabNav>
            <Tab>Page 1</Tab>
            <AddTab><Icon $c="#fff" $w={3} width="11" height="11" viewBox="0 0 11 11"><path d="M5.500 0V11M0 5.500H11" /></Icon></AddTab>
          </Tabs>
        </LeftSide>

        <Viz>
          <PanelHead $pad="0 10px 0 8px"><PanelTitle $ls={-0.14}>Visualizations</PanelTitle><Collapse /></PanelHead>
          <BuildLabel>Build visual</BuildLabel>
          <BuildTabs>
            <BuildTab $on>
              <Icon width="24" height="25" viewBox="0 0 24 25"><path d="M0 .5H19" stroke={D} /><path d="M.5 5.500H23.500V12.500H.5ZM.5 16.500H23.500V23.500H.5Z" fill="#117865" stroke={D} strokeDasharray="2 1.500" /></Icon>
            </BuildTab>
            <BuildTab>
              <Icon $c="#444" $w={1.200} width="22" height="24" viewBox="0 0 22 24"><path d="M1 20V10H6V1.500H11.500V11M1 20H6V10M11.500 7H15V8M6 20V14" /><path d="M21.500 8 11 18 9 16.500Q17 10 21.500 8ZM9 17Q6 17 5 22.500 11 23 11 18Z" fill="#f3f3f3" /></Icon>
            </BuildTab>
            <BuildTab>
              <Icon $c="#333" $w={1.200} width="24" height="24" viewBox="0 0 24 24"><circle cx="10.500" cy="10.500" r="9.800" /><path d="M18 17.500 23.500 23" strokeWidth="2.600" /><path d="M1 11 6 7 10 10 18 4.500M5.500 17V12M9 19V14M12.500 18V12M16 16V9" /></Icon>
            </BuildTab>
          </BuildTabs>
          <Icon $c="#a19f9d" width="180" height="1" viewBox="0 0 180 1"><path d="M0 .5H15L23.500-8 32 .5H180" /></Icon>
          <Gallery>
            {ICONS.map((ic, i) => (
              <Cell key={i} $on={i === 0}><Icon width="18" height="18" viewBox="0 0 18 18">{ic}</Icon></Cell>
            ))}
          </Gallery>
          <Wells>
            {["Borough", "Sum of Count"].map((name, i) => (
              <React.Fragment key={name}>
                <WellLabel $mt={i ? 7 : 0}>{i ? "X-axis" : "Y-axis"}</WellLabel>
                <Well $chip>
                  <Chip>{name}<Grow /><Chevron s={8} />
                    <Icon $c="#555" width="6" height="6" viewBox="0 0 7 7"><path d="M.5.5 6.500 6.500M6.500.5.5 6.500" /></Icon>
                  </Chip>
                  <Callout $x={-1} $y={i ? 0 : 2} $w={170 + i} $h={i ? 30 : 28} />
                </Well>
              </React.Fragment>
            ))}
            <WellLabel $mt={7}>Legend</WellLabel>
            <Well>Add data fields here</Well>
            <WellLabel $mt={6}>Small multiples</WellLabel>
            <Well>Add data fields here</Well>
            <WellScroll />
          </Wells>
        </Viz>

        <Data>
          <PanelHead $pad="0 5px 0 4px"><PanelTitle>Data</PanelTitle><Collapse /></PanelHead>
          <SearchBox $h={27} $b="#605e5c" $open $pl={7} $gap={7} $fs={13.200} $c="#484644">
            <Icon $c="#484644" $w={1.200} width="14" height="14" viewBox="0 0 14 14"><circle cx="9" cy="5" r="4.400" /><path d="M5.800 8.200.5 13.500" /></Icon>
            Search
          </SearchBox>
          <Tree>
            <TableRow>
              <Chevron s={9} c="#555" />
              <TableIcon>
                <Icon $c="#323130" $w={1.100} width="19" height="17" viewBox="0 0 19 17">
                  <rect x=".5" y="1.500" width="11" height="11" rx="2" /><path d="M.5 5H11.500M.5 9H11.500M4 1.500V12.500M8 1.500V12.500" />
                  <circle cx="12.500" cy="12.500" r="5.200" fill="#117865" stroke="none" /><path d="M10 12.500 12 14.300 15 11" stroke="#fff" />
                </Icon>
              </TableIcon>
              Kusto Query Result
            </TableRow>
            {[["Borough", 1, 0], ["Count", 1, 1], ["Latitude", 0, 1], ["Longitude", 0, 1], ["Zone", 0, 0]].map(([n, on, sum]) => (
              <FieldRow key={n}>
                <Check $on={on}>{on ? <Icon $c="#fff" $w={1.200} width="7" height="5" viewBox="0 0 7 5"><path d="M.5 2.500 2.500 4.500 6.500.5" /></Icon> : null}</Check>
                <SigmaSlot>{sum ? <Icon $c="#555" width="10" height="11" viewBox="0 0 10 11"><path d="M9.500 2V.5H.5L5.500 5.500.5 10.500H9.500V9" /></Icon> : null}</SigmaSlot>
                {n}
              </FieldRow>
            ))}
          </Tree>
          <Callout $x={-2} $y={76} $w={162} $h={81} />
        </Data>
      </Body>

      <Status>
        Page 1 of 1
        <Spacer />
        <Icon $c="#555" $w={2} width="5" height="4" viewBox="0 0 5 4"><path d="M0 2H5" /></Icon>
        <ZoomTrack><ZoomThumb /></ZoomTrack>
        <Icon $c="#444" width="8" height="8" viewBox="0 0 8 8"><path d="M4 0V8M0 4H8" /></Icon>
        <ZoomValue>100%</ZoomValue>
        <Icon $c="#484644" width="14" height="10" viewBox="0 0 14 10"><rect x=".5" y=".5" width="13" height="9" rx="1.500" /><path d="M5 2.500H3V7.500H5M9 2.500H11V7.500H9" /></Icon>
      </Status>
    </Page>
  );
}
